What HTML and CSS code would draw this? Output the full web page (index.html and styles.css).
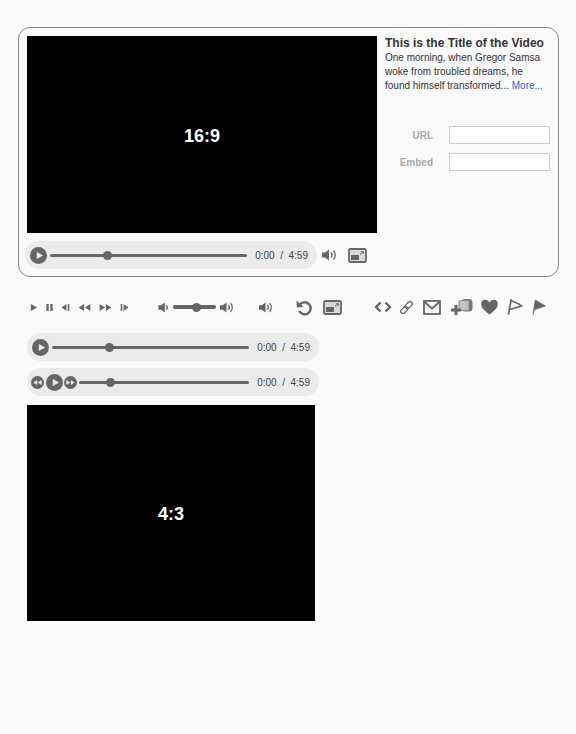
FILE: index.html
```html
<!DOCTYPE html>
<html lang="en">
<head>
    <meta charset="UTF-8">
    <title>Video Player Controls</title>
    <link rel="stylesheet" href="styles.css">
</head>
<body>

<svg class="sprites" width="0" height="0">
    <symbol id="i-play" viewBox="0 0 10 10"><path d="M2 1l7 4-7 4z"/></symbol>
    <symbol id="i-pause" viewBox="0 0 10 10"><path d="M1.500 1h2.600v8H1.500zM5.900 1h2.600v8H5.900z"/></symbol>
    <symbol id="i-prev" viewBox="0 0 10 10"><path d="M6 1v8L.5 5zM7.500 1h1.700v8H7.500z"/></symbol>
    <symbol id="i-next" viewBox="0 0 10 10"><path d="M4 1v8l5.500-4zM.8 1h1.700v8H.8z"/></symbol>
    <symbol id="i-rew" viewBox="0 0 14 10"><path d="M6.500 1v8L.5 5zM13.500 1v8l-6-4z"/></symbol>
    <symbol id="i-ffw" viewBox="0 0 14 10"><path d="M.5 1v8l6-4zM7.500 1v8l6-4z"/></symbol>
    <symbol id="i-vol" viewBox="0 0 16 14"><path d="M1 4.500h3L8 1.500v11l-4-3H1z"/><path d="M10 4.500a3.500 3.500 0 0 1 0 5" fill="none" stroke="currentColor" stroke-width="1.500"/><path d="M12.500 2.500a7 7 0 0 1 0 9" fill="none" stroke="currentColor" stroke-width="1.500"/></symbol>
    <symbol id="i-vol-low" viewBox="0 0 12 14"><path d="M1 4.500h3L8 1.500v11l-4-3H1z"/><path d="M9.500 4.500a3.500 3.500 0 0 1 0 5" fill="none" stroke="currentColor" stroke-width="1.500"/></symbol>
    <symbol id="i-size" viewBox="0 0 19 15"><rect x="1" y="1" width="17" height="13" rx="1.500" fill="#d8d8d8" stroke="currentColor" stroke-width="1.800"/><path d="M3 7h8v5H3z"/><path d="M12.500 3.200h3.300v3z"/><path d="M12 6.500l2-1.800" fill="none" stroke="currentColor"/></symbol>
</svg>

<div class="page">
    <!-- Main player card -->
    <div class="card">
        <div class="card-top">
            <div class="video wide">16:9</div>
            <div class="side">
                <h2>This is the Title of the Video</h2>
                <p>One morning, when Gregor Samsa woke from troubled dreams, he found himself transformed... <a href="#">More...</a></p>
                <div class="share">
                    <label for="url">URL</label>
                    <input type="text" id="url">
                    <label for="embed">Embed</label>
                    <input type="text" id="embed">
                </div>
            </div>
        </div>
        <div class="card-controls">
            <div class="player">
                <span class="round big"><svg><use href="#i-play"/></svg></span>
                <div class="track"><span class="knob" style="left: 53px"></span></div>
                <span class="time">0:00 &nbsp;/&nbsp; 4:59</span>
            </div>
            <svg class="icon vol-main"><use href="#i-vol"/></svg>
            <svg class="icon size-main"><use href="#i-size"/></svg>
        </div>
    </div>

    <!-- Loose icons -->
    <div class="icons">
        <svg class="icon small play-s"><use href="#i-play"/></svg>
        <svg class="icon small"><use href="#i-pause"/></svg>
        <svg class="icon small"><use href="#i-prev"/></svg>
        <svg class="icon rw"><use href="#i-rew"/></svg>
        <svg class="icon rw"><use href="#i-ffw"/></svg>
        <svg class="icon small"><use href="#i-next"/></svg>

        <svg class="icon vol-low"><use href="#i-vol-low"/></svg>
        <div class="vol-track"><span class="knob" style="left: 18.5px"></span></div>
        <svg class="icon vol-high"><use href="#i-vol"/></svg>

        <svg class="icon vol-solo"><use href="#i-vol"/></svg>

        <svg class="icon replay" viewBox="0 0 17 17"><path d="M3.800 5.800A6 6 0 1 1 3.300 12" fill="none" stroke="currentColor" stroke-width="2.400"/><path d="M.5 1.500l.3 7 6.700-.6z"/></svg>
        <svg class="icon size-solo"><use href="#i-size"/></svg>

        <svg class="icon code" viewBox="0 0 18 12"><path d="M6.500 1.500L2 6l4.500 4.500M11.500 1.500L16 6l-4.500 4.500" fill="none" stroke="currentColor" stroke-width="2.400"/></svg>
        <svg class="icon link" viewBox="0 0 15 15"><g fill="none" stroke="currentColor" stroke-width="1.300"><rect x="7.500" y="1" width="4.500" height="8" rx="2.250" transform="rotate(45 9.750 5)"/><rect x="3" y="6" width="4.500" height="8" rx="2.250" transform="rotate(45 5.250 10)"/></g></svg>
        <svg class="icon mail" viewBox="0 0 18 15"><rect x="1" y="1" width="16" height="13" fill="none" stroke="currentColor" stroke-width="1.800"/><path d="M1.500 2L9 8.500 16.500 2" fill="none" stroke="currentColor" stroke-width="1.800"/></svg>
        <svg class="icon add" viewBox="0 0 22 18"><rect x="10.500" y="1" width="11" height="12.500" rx="3.500" fill="#777"/><rect x="8" y="2.500" width="10" height="10" rx="1.500" fill="#c4c4c4" stroke="#888"/><path d="M0 10.500h10v3H0zM3.500 7h3v10h-3z"/></svg>
        <svg class="icon heart" viewBox="0 0 17 16"><path d="M8.500 15.500C2.800 11 .2 8.500.2 5A4.300 4.300 0 0 1 8.500 3.500 4.300 4.300 0 0 1 16.800 5c0 3.500-2.600 6-8.300 10.500z"/></svg>
        <svg class="icon flag" viewBox="0 0 16 16"><path d="M1.500 15.500L4 1c3 3 7 2 10.500 6L2.800 10.500" fill="none" stroke="currentColor" stroke-width="1.700"/></svg>
        <svg class="icon flag-solid" viewBox="0 0 14 16"><path d="M1 15.500L3.300 1 13.500 7l-11 3.500z" stroke="currentColor" stroke-width=".8"/></svg>
    </div>

    <!-- Standalone players -->
    <div class="player wide-player">
        <span class="round big"><svg><use href="#i-play"/></svg></span>
        <div class="track"><span class="knob" style="left: 53px"></span></div>
        <span class="time">0:00 &nbsp;/&nbsp; 4:59</span>
    </div>

    <div class="player wide-player skip">
        <span class="round mid"><svg><use href="#i-rew"/></svg></span>
        <span class="round big tight"><svg><use href="#i-play"/></svg></span>
        <span class="round mid"><svg><use href="#i-ffw"/></svg></span>
        <div class="track short"><span class="knob" style="left: 27px"></span></div>
        <span class="time">0:00 &nbsp;/&nbsp; 4:59</span>
    </div>

    <div class="video standard">4:3</div>
</div>

</body>
</html>
```

FILE: styles.css
```css
body {
    font-family: "Liberation Sans", Arial, sans-serif;
    background-color: #fafafa;
    color: #333;
    margin: 0;
}
.sprites {
    position: absolute;
}
.page {
    width: 576px;
    height: 734px;
    padding: 27px 18px 0;
    box-sizing: border-box;
}
.card {
    width: 541px;
    height: 250px;
    box-sizing: border-box;
    border: 1px solid #888;
    border-radius: 12px;
    padding: 8px 8px 0 6px;
}
.card-top {
    display: flex;
}
.video {
    background-color: #000;
    color: #fff;
    font-size: 18px;
    font-weight: bold;
    display: flex;
    align-items: center;
    justify-content: center;
    box-sizing: border-box;
    padding-top: 2px;
}
.video.wide {
    width: 350px;
    height: 197px;
    margin-left: 2px;
    padding-top: 3px;
    flex: none;
}
.video.standard {
    width: 288px;
    height: 216px;
    margin: 9px 0 0 9px;
}
.side {
    margin-left: 8px;
    flex: 1;
}
.side h2 {
    font-size: 12px;
    line-height: 14px;
    margin: 0;
    color: #333;
    white-space: nowrap;
}
.side p {
    font-size: 10px;
    line-height: 14px;
    margin: 1px 0 0;
}
.side a {
    color: #1a66e0;
    text-decoration: none;
}
.share {
    display: grid;
    grid-template-columns: 48px 101px;
    column-gap: 16px;
    row-gap: 9px;
    align-items: center;
    margin-top: 33px;
}
.share label {
    font-size: 10px;
    font-weight: bold;
    color: #aaa;
    text-align: right;
}
.share input {
    width: 101px;
    height: 18px;
    box-sizing: border-box;
    border: 1px solid #ccc;
    background-color: #fff;
    padding: 0;
}
.card-controls {
    display: flex;
    align-items: center;
    margin-top: 8px;
}
.player {
    display: flex;
    align-items: center;
    width: 292px;
    height: 28px;
    box-sizing: border-box;
    background-color: #ebebeb;
    border-radius: 14px;
    padding: 0 9px 0 5px;
    flex: none;
}
.wide-player {
    margin: 0 0 7px 9px;
}
.player.skip {
    padding-left: 4px;
}
.round {
    background-color: #666;
    color: #ebebeb;
    border-radius: 50%;
    display: flex;
    align-items: center;
    justify-content: center;
    flex: none;
}
.round svg {
    fill: currentColor;
}
.round.big {
    width: 17px;
    height: 17px;
}
.round.big svg {
    width: 9px;
    height: 9px;
    margin-left: 1px;
}
.round.mid {
    width: 13px;
    height: 13px;
}
.round.mid svg {
    width: 9px;
    height: 7px;
}
.round.tight {
    margin: 0 1px 0 2px;
}
.track {
    position: relative;
    flex: 1;
    height: 3px;
    background-color: #666;
    border-radius: 2px;
    margin: 0 8px 0 3px;
}
.track.short {
    margin-left: 2px;
}
.knob {
    position: absolute;
    top: 50%;
    width: 9px;
    height: 9px;
    margin-top: -4.500px;
    background-color: #666;
    border-radius: 50%;
}
.time {
    font-size: 10px;
    color: #444;
    white-space: nowrap;
}
.icon {
    display: block;
    fill: #666;
    color: #666;
    flex: none;
}
.vol-main {
    width: 16px;
    height: 14px;
    margin-left: 4px;
}
.size-main {
    width: 19px;
    height: 15px;
    margin-left: 11px;
}
.icons {
    display: flex;
    align-items: center;
    height: 20px;
    margin: 20px 0 16px;
    padding-left: 11px;
}
.icon.small {
    width: 9px;
    height: 9px;
    margin-left: 7px;
}
.icon.play-s {
    margin-left: 0;
}
.icon.rw {
    width: 13px;
    height: 9px;
    margin-left: 8px;
}
.icon.rw + .icon.small {
    margin-left: 8px;
}
.vol-low {
    width: 12px;
    height: 13px;
    margin-left: 28px;
}
.vol-track {
    position: relative;
    width: 43px;
    height: 4px;
    margin-left: 4px;
    border-radius: 2px;
    background-color: #666;
}
.vol-high {
    width: 15px;
    height: 13px;
    margin-left: 3px;
}
.vol-solo {
    width: 15px;
    height: 13px;
    margin-left: 24px;
}
.replay {
    width: 17px;
    height: 17px;
    margin-left: 23px;
}
.size-solo {
    width: 19px;
    height: 15px;
    margin-left: 10px;
}
.code {
    width: 18px;
    height: 12px;
    margin-left: 32px;
}
.link {
    width: 15px;
    height: 15px;
    margin-left: 7px;
}
.mail {
    width: 18px;
    height: 15px;
    margin-left: 9px;
}
.add {
    width: 22px;
    height: 18px;
    margin-left: 10px;
}
.heart {
    width: 17px;
    height: 16px;
    margin-left: 8px;
}
.flag {
    width: 16px;
    height: 16px;
    margin-left: 9px;
}
.flag-solid {
    width: 14px;
    height: 16px;
    margin-left: 9px;
}
```
